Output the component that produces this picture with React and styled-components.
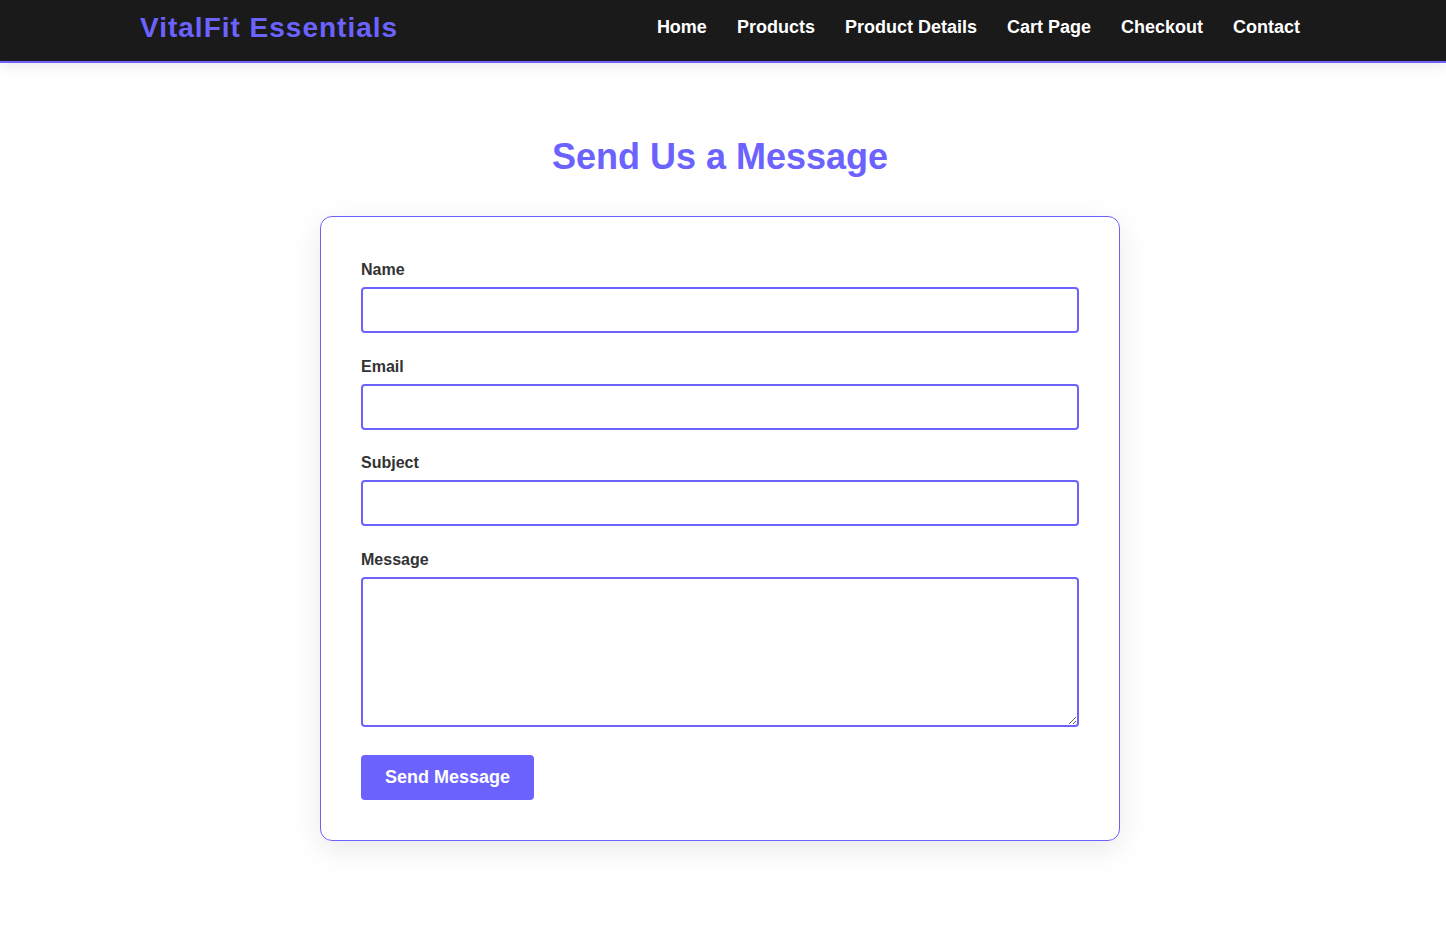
import React from "react";
import styled, { createGlobalStyle } from "styled-components";

const GlobalStyle = createGlobalStyle`
  * { box-sizing: border-box; }
  body {
    margin: 0;
    background: #ffffff;
    font-family: "Liberation Sans", Arial, sans-serif;
    color: #333;
  }
`;

const Header = styled.header`
  background: #1a1a1a;
  border-bottom: 2px solid #6c63ff;
  box-shadow: 0 4px 12px rgba(0, 0, 0, 0.08);
  padding-right: 6px;
`;

const HeaderInner = styled.div`
  width: 1160px;
  margin: 0 auto;
  height: 61px;
  padding-bottom: 6px;
  display: flex;
  align-items: center;
  justify-content: space-between;
`;

const Logo = styled.a`
  color: #6c63ff;
  font-size: 28px;
  font-weight: 700;
  letter-spacing: 1px;
  text-decoration: none;
  line-height: 1;
`;

const Nav = styled.nav`
  display: flex;
  gap: 30px;
`;

const NavLink = styled.a`
  color: #ffffff;
  font-size: 18px;
  font-weight: 700;
  text-decoration: none;
`;

const Main = styled.main`
  padding: 73px 6px 90px 0;
  display: flex;
  flex-direction: column;
  align-items: center;
`;

const Title = styled.h2`
  margin: 0 0 38px;
  color: #6c63ff;
  font-size: 36px;
  font-weight: 700;
  line-height: normal;
`;

const Card = styled.form`
  width: 800px;
  border: 1px solid #6c63ff;
  border-radius: 12px;
  padding: 40px;
  background: #fff;
  box-shadow: 0 8px 30px rgba(0, 0, 0, 0.09);
  display: flex;
  flex-direction: column;
`;

const Field = styled.div`
  display: flex;
  flex-direction: column;
  margin-bottom: 20.6px;
`;

const Label = styled.label`
  font-size: 16px;
  font-weight: 700;
  line-height: 25.6px;
  color: #333;
  margin-bottom: 4.4px;
`;

const Input = styled.input`
  height: 46px;
  width: 100%;
  border: 2px solid #6c63ff;
  border-radius: 4px;
  padding: 12px;
  font-family: inherit;
  font-size: 16px;
  outline: none;
`;

const TextArea = styled.textarea`
  display: block;
  height: 150px;
  width: 100%;
  border: 2px solid #6c63ff;
  border-radius: 4px;
  padding: 12px;
  font-family: inherit;
  font-size: 16px;
  outline: none;
`;

const Button = styled.button`
  align-self: flex-start;
  margin-top: 8px;
  height: 45px;
  padding: 0 24px;
  background: #6c63ff;
  color: #fff;
  border: none;
  border-radius: 4px;
  font-family: inherit;
  font-size: 18px;
  font-weight: 700;
  cursor: pointer;
`;

const links = ["Home", "Products", "Product Details", "Cart Page", "Checkout", "Contact"];

export default function App() {
  return (
    <>
      <GlobalStyle />
      <Header>
        <HeaderInner>
          <Logo href="#">VitalFit Essentials</Logo>
          <Nav>
            {links.map((l) => (
              <NavLink key={l} href="#">{l}</NavLink>
            ))}
          </Nav>
        </HeaderInner>
      </Header>
      <Main>
        <Title>Send Us a Message</Title>
        <Card onSubmit={(e) => e.preventDefault()}>
          <Field>
            <Label htmlFor="name">Name</Label>
            <Input id="name" type="text" />
          </Field>
          <Field>
            <Label htmlFor="email">Email</Label>
            <Input id="email" type="email" />
          </Field>
          <Field>
            <Label htmlFor="subject">Subject</Label>
            <Input id="subject" type="text" />
          </Field>
          <Field>
            <Label htmlFor="message">Message</Label>
            <TextArea id="message" />
          </Field>
          <Button type="submit">Send Message</Button>
        </Card>
      </Main>
    </>
  );
}
